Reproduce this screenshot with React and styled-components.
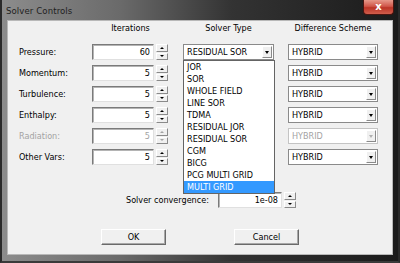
import React from "react";
import styled, { createGlobalStyle, css } from "styled-components";

const GlobalStyle = createGlobalStyle`
  html, body {
    margin: 0;
    padding: 0;
    background: #ffffff;
  }
  body {
    font-family: "DejaVu Sans Condensed", "DejaVu Sans", "Liberation Sans", sans-serif;
    font-size: 9px;
    color: #000;
  }
`;

const Window = styled.div`
  width: 400px;
  height: 263px;
  box-sizing: border-box;
  display: flex;
  flex-direction: column;
  background: linear-gradient(90deg, #8c8c8c 0%, #6a6a6a 30%, #333 58%, #1b1b1b 100%);
  border-left: 2px solid #2a2a2a;
  border-right: 2px solid #2a2a2a;
  border-bottom: 2px solid #3a3a3a;
`;

const TitleBar = styled.div`
  height: 20px;
  display: flex;
  align-items: flex-start;
  padding-left: 4px;
`;

const Title = styled.span`
  margin-top: 5px;
  font-size: 9.5px;
  color: #1e1e1e;
  letter-spacing: 0.1px;
`;

const CloseButton = styled.div`
  margin-left: auto;
  margin-right: 4px;
  width: 31px;
  height: 15px;
  box-sizing: border-box;
  border: 1px solid #4a1510;
  border-top: none;
  border-radius: 0 0 4px 4px;
  background: linear-gradient(180deg, #e6988a 0%, #d0574a 45%, #bb3426 55%, #d05e4c 100%);
  display: flex;
  align-items: center;
  justify-content: center;
  color: #fff;
  font-family: "DejaVu Sans", sans-serif;
  font-weight: bold;
  font-size: 10px;
  line-height: 1;
`;

const Panel = styled.div`
  flex: 1;
  margin: 0 5px 6px 5px;
  background: #f0f0f0;
  border: 1px solid #b8b8b8;
  box-sizing: border-box;
  display: flex;
  flex-direction: column;
  padding: 2px 0 0 11px;
  position: relative;
`;

const Grid = styled.div`
  display: grid;
  grid-template-columns: 59px 77px 91px 90px;
  grid-auto-rows: 16px;
  column-gap: 14px;
  row-gap: 5px;
  align-items: center;
`;

const Header = styled.div`
  text-align: center;
  align-self: start;
  margin-bottom: 12px;
`;

const Label = styled.div`
  white-space: nowrap;
  color: ${(p) => (p.$disabled ? "#a3a3a3" : "#000")};
`;

const SpinWrap = styled.div`
  display: flex;
  height: 16px;
  gap: 2px;
`;

const sunken = css`
  box-sizing: border-box;
  background: #fff;
  border-top: 1px solid #7a7a7a;
  border-left: 1px solid #7a7a7a;
  border-right: 1px solid #e0e0e0;
  border-bottom: 1px solid #e0e0e0;
  box-shadow: inset 1px 1px 0 #b4b4b4;
`;

const NumberBox = styled.div`
  ${sunken}
  width: ${(p) => p.$width || 62}px;
  height: 16px;
  display: flex;
  align-items: center;
  justify-content: flex-end;
  padding-right: 3px;
  color: ${(p) => (p.$disabled ? "#a3a3a3" : "#000")};
`;

const SpinButtons = styled.div`
  display: flex;
  flex-direction: column;
  gap: 1px;
`;

const SpinButton = styled.div`
  width: 12px;
  flex: 1;
  box-sizing: border-box;
  background: #f0f0f0;
  border-top: 1px solid #fff;
  border-left: 1px solid #fff;
  border-right: 1px solid #8a8a8a;
  border-bottom: 1px solid #8a8a8a;
  display: flex;
  align-items: center;
  justify-content: center;
`;

const Tri = styled.div`
  width: 0;
  height: 0;
  border-left: 2px solid transparent;
  border-right: 2px solid transparent;
  ${(p) =>
    p.$up
      ? css`border-bottom: 2px solid ${p.$disabled ? "#a3a3a3" : "#000"};`
      : css`border-top: 2px solid ${p.$disabled ? "#a3a3a3" : "#000"};`}
`;

const Combo = styled.div`
  box-sizing: border-box;
  height: 16px;
  background: #fff;
  border: 1px solid ${(p) => (p.$disabled ? "#c4c4c4" : "#8a8a8a")};
  display: flex;
  align-items: center;
  padding-left: 3px;
  color: ${(p) => (p.$disabled ? "#a3a3a3" : "#000")};
`;

const ComboText = styled.span`
  flex: 1;
`;

const ComboArrow = styled.div`
  width: 10px;
  height: 12px;
  margin-right: 1px;
  box-sizing: border-box;
  background: #f0f0f0;
  border-top: 1px solid #fff;
  border-left: 1px solid #fff;
  border-right: 1px solid #8a8a8a;
  border-bottom: 1px solid #8a8a8a;
  display: flex;
  align-items: center;
  justify-content: center;
`;

const DropTri = styled.div`
  width: 0;
  height: 0;
  border-left: 2.5px solid transparent;
  border-right: 2.5px solid transparent;
  border-top: 3px solid ${(p) => (p.$disabled ? "#b0b0b0" : "#000")};
`;

const DropList = styled.ul`
  position: absolute;
  left: 175px;
  top: 39px;
  width: 92px;
  margin: 0;
  padding: 0;
  list-style: none;
  background: #fff;
  border: 1px solid #646464;
  box-sizing: border-box;
  z-index: 2;
`;

const DropItem = styled.li`
  height: 12px;
  line-height: 12px;
  padding-left: 3px;
  white-space: nowrap;
  background: ${(p) => (p.$selected ? "#3399ff" : "transparent")};
  color: ${(p) => (p.$selected ? "#fff" : "#000")};
`;

const ConvergenceRow = styled.div`
  display: flex;
  align-items: center;
  margin-top: 27px;
  padding-left: 107px;
  height: 16px;
`;

const ConvergenceLabel = styled.span`
  width: 92px;
  white-space: nowrap;
`;

const ButtonRow = styled.div`
  display: flex;
  justify-content: center;
  gap: 68px;
  margin-top: 21px;
  margin-left: -11px;
`;

const PushButton = styled.div`
  width: 65px;
  height: 16px;
  box-sizing: border-box;
  background: #f0f0f0;
  border-top: 1px solid #fff;
  border-left: 1px solid #fff;
  border-right: 1px solid #6a6a6a;
  border-bottom: 1px solid #6a6a6a;
  box-shadow: inset -1px -1px 0 #a8a8a8;
  display: flex;
  align-items: center;
  justify-content: center;
`;

const rows = [
  { name: "Pressure:", value: "60", solver: "RESIDUAL SOR", scheme: "HYBRID" },
  { name: "Momentum:", value: "5", scheme: "HYBRID" },
  { name: "Turbulence:", value: "5", scheme: "HYBRID" },
  { name: "Enthalpy:", value: "5", scheme: "HYBRID" },
  { name: "Radiation:", value: "5", scheme: "HYBRID", disabled: true },
  { name: "Other Vars:", value: "5", scheme: "HYBRID" },
];

const solverTypes = [
  "JOR",
  "SOR",
  "WHOLE FIELD",
  "LINE SOR",
  "TDMA",
  "RESIDUAL JOR",
  "RESIDUAL SOR",
  "CGM",
  "BICG",
  "PCG MULTI GRID",
  "MULTI GRID",
];

function Spinner({ value, disabled, width }) {
  return (
    <SpinWrap>
      <NumberBox $disabled={disabled} $width={width}>
        {value}
      </NumberBox>
      <SpinButtons>
        <SpinButton>
          <Tri $up $disabled={disabled} />
        </SpinButton>
        <SpinButton>
          <Tri $disabled={disabled} />
        </SpinButton>
      </SpinButtons>
    </SpinWrap>
  );
}

function ComboBox({ text, disabled }) {
  return (
    <Combo $disabled={disabled}>
      <ComboText>{text}</ComboText>
      <ComboArrow>
        <DropTri $disabled={disabled} />
      </ComboArrow>
    </Combo>
  );
}

export default function App() {
  return (
    <>
      <GlobalStyle />
      <Window>
        <TitleBar>
          <Title>Solver Controls</Title>
          <CloseButton>x</CloseButton>
        </TitleBar>
        <Panel>
          <Grid>
            <div />
            <Header>Iterations</Header>
            <Header>Solver Type</Header>
            <Header>Difference Scheme</Header>
            {rows.map((r) => (
              <React.Fragment key={r.name}>
                <Label $disabled={r.disabled}>{r.name}</Label>
                <Spinner value={r.value} disabled={r.disabled} />
                {r.solver ? <ComboBox text={r.solver} /> : <div />}
                <ComboBox text={r.scheme} disabled={r.disabled} />
              </React.Fragment>
            ))}
          </Grid>
          <DropList>
            {solverTypes.map((s) => (
              <DropItem key={s} $selected={s === "MULTI GRID"}>
                {s}
              </DropItem>
            ))}
          </DropList>
          <ConvergenceRow>
            <ConvergenceLabel>Solver convergence:</ConvergenceLabel>
            <Spinner value="1e-08" width={64} />
          </ConvergenceRow>
          <ButtonRow>
            <PushButton>OK</PushButton>
            <PushButton>Cancel</PushButton>
          </ButtonRow>
        </Panel>
      </Window>
    </>
  );
}
